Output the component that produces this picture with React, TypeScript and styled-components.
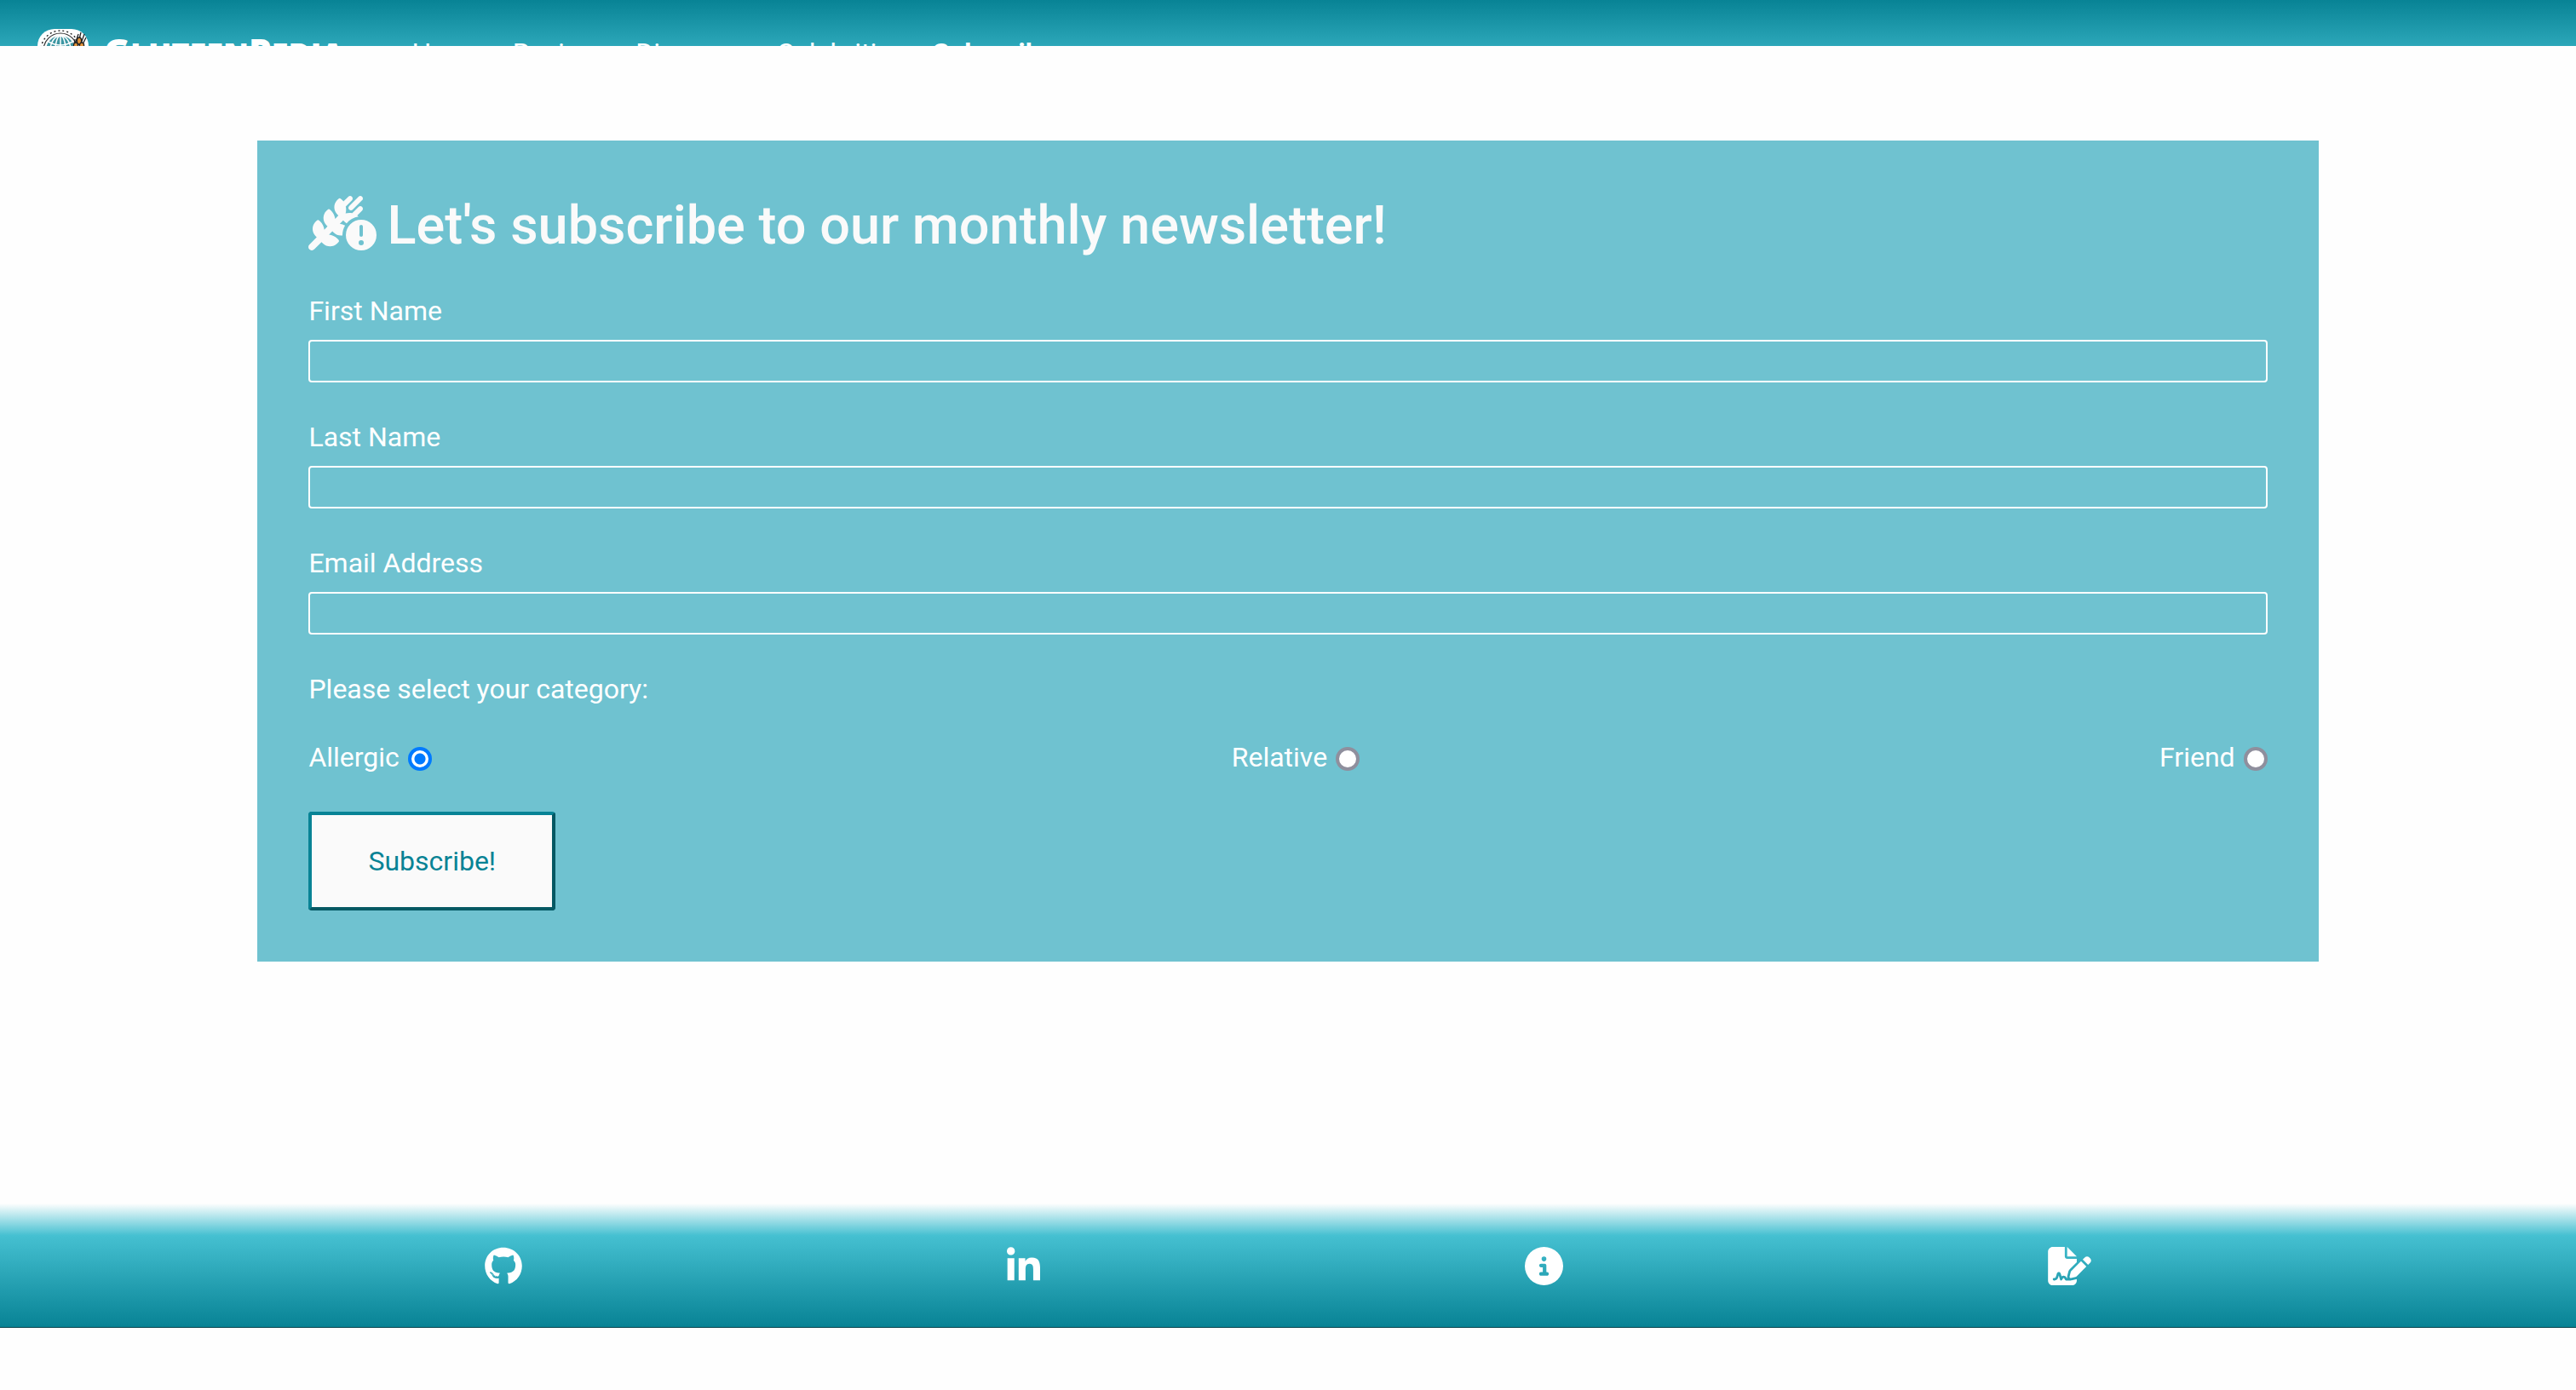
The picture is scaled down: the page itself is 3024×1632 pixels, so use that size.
import React from "react";
import styled, { createGlobalStyle } from "styled-components";
import {
  FaWheatAwnCircleExclamation,
  FaGithub,
  FaLinkedinIn,
  FaCircleInfo,
  FaFileSignature,
} from "react-icons/fa6";

const GlobalStyle = createGlobalStyle`
  *, *::before, *::after { box-sizing: border-box; }
  body {
    margin: 0;
    background: #fefefe;
    color: #fff;
    font-family: Roboto, "Liberation Sans", sans-serif;
    font-size: 32px;
    line-height: 48px;
  }
`;

const Header = styled.header`
  display: flex;
  align-items: flex-start;
  height: 54px;
  padding: 34px 44px 0;
  overflow: hidden;
  background: linear-gradient(#088395, #2ca7b9);
`;

const Brand = styled.a`
  display: flex;
  gap: 18px;
  color: #fff;
  font-family: "Open Sans", sans-serif;
  font-size: 36px;
  font-weight: 800;
  line-height: 52px;
  text-decoration: none;
  text-transform: uppercase;
`;

const Initial = styled.span`
  font-size: 42px;
`;

const Nav = styled.nav`
  display: flex;
  gap: 32px;
  padding: 4px 0 0 80px;
`;

const NavLink = styled.a<{ $active?: boolean }>`
  color: #fff;
  font-weight: ${(p) => (p.$active ? 700 : 400)};
  text-decoration: none;
`;

const Main = styled.main`
  display: flex;
  justify-content: center;
  padding: 111px 0 284px;
`;

const Form = styled.form`
  display: flex;
  flex-direction: column;
  width: 80%;
  padding: 60px;
  background: #6fc2d0;
`;

const Title = styled.h1`
  margin: 0 0 36px;
  color: #fafafa;
  font-size: 63px;
  font-weight: 500;
  line-height: 80px;

  svg {
    width: 80px;
    height: 64px;
    margin-right: 12px;
    vertical-align: -8px;
  }
`;

const Field = styled.div`
  display: flex;
  flex-direction: column;
  gap: 10px;
  margin-bottom: 40px;
`;

const TextInput = styled.input`
  width: 100%;
  height: 50px;
  padding: 2px 4px;
  border: 2px solid #fff;
  border-radius: 4px;
  background: transparent;
  color: #fff;
  font: inherit;
`;

const Categories = styled.fieldset`
  min-width: 0;
  margin: 0 0 40px;
  padding: 0;
  border: 0;
`;

const Legend = styled.legend`
  padding: 0;
  margin-bottom: 32px;
`;

const Options = styled.div`
  display: flex;
  justify-content: space-between;
`;

const Option = styled.label`
  display: flex;
  align-items: center;
  gap: 10px;
`;

const Radio = styled.input`
  appearance: none;
  width: 28px;
  height: 28px;
  margin: 4px 0 0;
  border: 4px solid #8f8f9d;
  border-radius: 50%;
  background: #fff;

  &:checked {
    border-color: #007aff;
    background: radial-gradient(circle, #007aff 6px, #fff 7px);
  }
`;

const SubmitButton = styled.button`
  align-self: flex-start;
  padding: 30px 66px;
  border: 4px solid;
  border-color: #088395 #055863 #055863 #088395;
  border-radius: 4px;
  background: #fafafa;
  color: #088395;
  font: inherit;
`;

const Footer = styled.footer`
  display: flex;
  justify-content: space-evenly;
  padding: 51px 0 49px;
  border-bottom: 1px solid #04424b;
  background: linear-gradient(rgba(69, 192, 209, 0), #45c0d1 26%, #088395);
`;

const FooterLink = styled.a<{ $width: number }>`
  display: flex;
  color: #fff;

  svg {
    width: ${(p) => p.$width}px;
    height: 45px;
  }
`;

const Logo = () => (
  <svg width="60" height="60" viewBox="0 0 60 60" aria-hidden="true">
    <rect width="60" height="60" rx="20" fill="#fff" />
    <circle cx="27" cy="25" r="23" fill="none" stroke="#222" strokeWidth="1.4" strokeDasharray="2 3" />
    <circle cx="27" cy="25" r="20" fill="#fff" stroke="#333" strokeWidth="1.2" />
    <circle cx="27" cy="25" r="17" fill="#3d97a3" />
    <g fill="none" stroke="#fff" strokeWidth="1.5">
      <ellipse cx="27" cy="25" rx="6" ry="17" />
      <ellipse cx="27" cy="25" rx="12" ry="17" />
      <path d="M27 8v34M13 15q14 8 28 0M10 25h34" />
    </g>
    <g stroke="#222" strokeWidth="1.3">
      <path d="M47 20L51 4M50 20L55 6M44 18L48 6M52 20L57 10M42 24L44 12" />
      <ellipse cx="49" cy="14" rx="2.6" ry="4" fill="#e2933a" />
      <ellipse cx="45" cy="20" rx="2.6" ry="4" fill="#e2933a" />
      <ellipse cx="52" cy="20" rx="2.6" ry="4" fill="#e2933a" />
    </g>
  </svg>
);

const links = ["Home", "Recipes", "Diagnose", "Celebrities", "Subscribe"];
const fields = [
  { id: "first-name", label: "First Name", type: "text" },
  { id: "last-name", label: "Last Name", type: "text" },
  { id: "email", label: "Email Address", type: "email" },
];
const categories = ["Allergic", "Relative", "Friend"];
const social = [
  { label: "GitHub", Icon: FaGithub, width: 44 },
  { label: "LinkedIn", Icon: FaLinkedinIn, width: 39 },
  { label: "About", Icon: FaCircleInfo, width: 45 },
  { label: "Sign up", Icon: FaFileSignature, width: 51 },
];

export default function App() {
  return (
    <>
      <GlobalStyle />
      <Header>
        <Brand href="#">
          <Logo />
          <span>
            <Initial>G</Initial>luteen<Initial>P</Initial>edia
          </span>
        </Brand>
        <Nav>
          {links.map((name) => (
            <NavLink key={name} href="#" $active={name === "Subscribe"}>
              {name}
            </NavLink>
          ))}
        </Nav>
      </Header>
      <Main>
        <Form>
          <Title>
            <FaWheatAwnCircleExclamation />
            Let's subscribe to our monthly newsletter!
          </Title>
          {fields.map((f) => (
            <Field key={f.id}>
              <label htmlFor={f.id}>{f.label}</label>
              <TextInput id={f.id} type={f.type} />
            </Field>
          ))}
          <Categories>
            <Legend>Please select your category:</Legend>
            <Options>
              {categories.map((name, i) => (
                <Option key={name}>
                  {name}
                  <Radio type="radio" name="category" value={name} defaultChecked={i === 0} />
                </Option>
              ))}
            </Options>
          </Categories>
          <SubmitButton type="button">Subscribe!</SubmitButton>
        </Form>
      </Main>
      <Footer>
        {social.map(({ label, Icon, width }) => (
          <FooterLink key={label} href="#" aria-label={label} $width={width}>
            <Icon />
          </FooterLink>
        ))}
      </Footer>
    </>
  );
}
